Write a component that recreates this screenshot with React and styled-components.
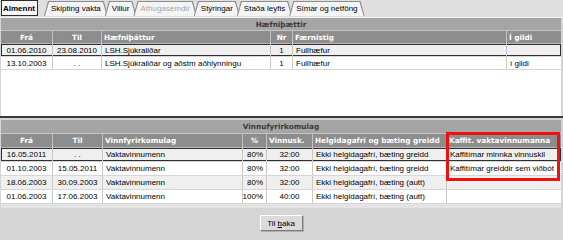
import React from 'react';
import styled, { createGlobalStyle, css } from 'styled-components';

const dither = (a, b) => `repeating-conic-gradient(${a} 0 25%, ${b} 0 50%) 0 0 / 2px 2px`;

const GlobalStyle = createGlobalStyle`
  *, *::before, *::after { box-sizing: border-box; }
  html, body { margin: 0; padding: 0; }
  body {
    background: #d6d6d6;
    font-family: "Liberation Sans", Arial, sans-serif;
    font-size: 8px;
    color: #000;
  }
`;

const Window = styled.div`
  position: relative;
  width: 563px;
  height: 234px;
  display: flex;
  flex-direction: column;
  background: ${dither('#d0d0d0', '#dadada')};
  overflow: hidden;
`;

const TabStrip = styled.div`
  height: 18px;
  display: flex;
  align-items: flex-end;
  padding: 0 0 1px 1px;
  background: ${dither('#dadada', '#e4e4e4')};
  border-bottom: 1px solid #f2f2f2;
`;

const trapezoid = 'polygon(0 100%, 4px 0, calc(100% - 4px) 0, 100% 100%)';

const Tab = styled.div`
  position: relative;
  z-index: 1;
  height: 15px;
  display: flex;
  align-items: center;
  white-space: nowrap;
  padding: 0 7px;
  margin-left: ${(p) => p.$gap}px;
  color: ${(p) => (p.$disabled ? '#a6a6a6' : '#000')};

  &::before {
    content: '';
    position: absolute;
    inset: 0;
    z-index: -1;
    background: #8c8c8c;
    clip-path: ${trapezoid};
  }
  &::after {
    content: '';
    position: absolute;
    inset: 1px 1px 0 1px;
    z-index: -1;
    background: #f4f4f4;
    clip-path: ${trapezoid};
  }

  ${(p) =>
    p.$active &&
    css`
      z-index: 2;
      height: 16px;
      padding: 0 2px 0 1px;
      font-weight: 700;
      border: 1px solid #2c2c2c;
      background: #f8f8f8;
      &::before,
      &::after {
        display: none;
      }
    `}
`;

const Grid = styled.div`
  width: 560px;
  margin-left: 1px;
  display: flex;
  flex-direction: column;
  background: #fff;
  height: ${(p) => p.$height}px;
  flex: none;
`;

const SectionBar = styled.div`
  height: ${(p) => p.$h}px;
  flex: none;
  display: flex;
  align-items: center;
  justify-content: center;
  background: ${dither('#a0a0a0', '#aaaaaa')};
  border-bottom: 1px solid #c4c4c4;
  font-family: "DejaVu Sans", Verdana, sans-serif;
  font-weight: 700;
  font-size: 7.3px;
  color: #3a3a3a;
`;

const Row = styled.div`
  display: grid;
  grid-template-columns: ${(p) => p.$cols};
  height: ${(p) => p.$h}px;
  flex: none;
  background: ${(p) => (p.$alt ? '#efefef' : '#fff')};
  border-bottom: 1px solid #d6d6d6;
  ${(p) =>
    p.$selected &&
    css`
      box-shadow: inset 0 0 0 1px #2e2e2e;
    `}
`;

const HeadRow = styled(Row)`
  background: ${dither('#888888', '#929292')};
  border-bottom: 1px solid #b8b8b8;
`;

const alignMap = { left: 'flex-start', center: 'center', right: 'flex-end' };

const Cell = styled.div`
  display: flex;
  align-items: center;
  justify-content: ${(p) => alignMap[p.$align || 'left']};
  padding: 0 3px;
  border-right: 1px solid #c8c8c8;
  white-space: nowrap;
  overflow: hidden;
  &:last-child {
    border-right: none;
  }
`;

const HeadCell = styled(Cell)`
  padding: 0 2px;
  border-right: 1px solid #c2c2c2;
  color: #fff;
  font-family: "DejaVu Sans", Verdana, sans-serif;
  font-weight: 700;
  font-size: 7.3px;
`;

const Filler = styled.div`
  flex: 1;
  background: #fff;
`;

const Splitter = styled.div`
  height: 2px;
  flex: none;
  background: #3a3a3a;
  margin-bottom: 2px;
`;

const BottomEdge = styled.div`
  height: 4px;
  flex: none;
  width: 560px;
  margin-left: 1px;
  background: #e4e4e4;
`;

const Footer = styled.div`
  flex: 1;
  display: flex;
  justify-content: center;
  align-items: flex-start;
  padding-top: 7px;
`;

const Button = styled.button`
  width: 43px;
  height: 16px;
  padding: 0;
  margin: 0 0 0 -1px;
  font-family: "Liberation Sans", Arial, sans-serif;
  font-size: 8px;
  color: #000;
  background: ${dither('#d6d6d6', '#e0e0e0')};
  border: 1px solid;
  border-color: #ffffff #7c7c7c #7c7c7c #ffffff;
  box-shadow: 1px 1px 0 #b0b0b0;
`;

const Highlight = styled.div`
  position: absolute;
  left: 446px;
  top: 132px;
  width: 114px;
  height: 49px;
  border: 3px solid #f01010;
  pointer-events: none;
`;

const tabs = [
  { label: 'Almennt', active: true, gap: 0 },
  { label: 'Skipting vakta', gap: 6 },
  { label: 'Villur', gap: -3 },
  { label: 'Athugasemdir', disabled: true, gap: -3 },
  { label: 'Stýringar', gap: -3 },
  { label: 'Staða leyfis', gap: -3 },
  { label: 'Símar og netföng', gap: -3 },
];

const table1 = {
  title: 'Hæfniþættir',
  cols: '52px 49px 169px 22px 214px 1fr',
  head: [
    ['Frá', 'center'],
    ['Til', 'center'],
    ['Hæfniþáttur', 'left'],
    ['Nr', 'center'],
    ['Færnistig', 'left'],
    ['Í gildi', 'left'],
  ],
  align: ['center', 'center', 'left', 'center', 'left', 'left'],
  rows: [
    ['01.06.2010', '23.08.2010', 'LSH.Sjúkraliðar', '1', 'Fullhæfur', ''],
    ['13.10.2003', '. .', 'LSH.Sjúkraliðar og aðstm aðhlynningu', '1', 'Fullhæfur', 'í gildi'],
  ],
};

const table2 = {
  title: 'Vinnufyrirkomulag',
  cols: '52px 50px 140px 24px 46px 134px 1fr',
  head: [
    ['Frá', 'center'],
    ['Til', 'center'],
    ['Vinnfyrirkomulag', 'left'],
    ['%', 'center'],
    ['Vinnusk.', 'left'],
    ['Helgidagafrí og bæting greidd', 'left'],
    ['Kaffit. vaktavinnumanna', 'left'],
  ],
  align: ['center', 'center', 'left', 'right', 'center', 'left', 'left'],
  rows: [
    ['16.05.2011', '. .', 'Vaktavinnumenn', '80%', '32:00', 'Ekki helgidagafrí, bæting greidd', 'Kaffitímar minnka vinnuskil'],
    ['01.10.2003', '15.05.2011', 'Vaktavinnumenn', '80%', '32:00', 'Ekki helgidagafrí, bæting greidd', 'Kaffitímar greiddir sem viðbót'],
    ['18.06.2003', '30.09.2003', 'Vaktavinnumenn', '80%', '32:00', 'Ekki helgidagafrí, bæting (autt)', ''],
    ['01.06.2003', '17.06.2003', 'Vaktavinnumenn', '100%', '40:00', 'Ekki helgidagafrí, bæting (autt)', ''],
  ],
};

function DataGrid({ table, height, rowH, filler }) {
  return (
    <Grid $height={height}>
      <SectionBar $h={rowH}>{table.title}</SectionBar>
      <HeadRow $cols={table.cols} $h={rowH}>
        {table.head.map(([label, align]) => (
          <HeadCell key={label} $align={align}>
            {label}
          </HeadCell>
        ))}
      </HeadRow>
      {table.rows.map((row, i) => (
        <Row key={i} $cols={table.cols} $h={rowH} $alt={i % 2 === 0} $selected={i === 0}>
          {row.map((v, j) => (
            <Cell key={j} $align={table.align[j]}>
              {v}
            </Cell>
          ))}
        </Row>
      ))}
      {filler && <Filler />}
    </Grid>
  );
}

export default function App() {
  return (
    <>
      <GlobalStyle />
      <Window>
        <TabStrip>
          {tabs.map((t) => (
            <Tab key={t.label} $active={t.active} $disabled={t.disabled} $gap={t.gap}>
              {t.label}
            </Tab>
          ))}
        </TabStrip>
        <DataGrid table={table1} height={98} rowH={13} filler />
        <Splitter />
        <DataGrid table={table2} height={84} rowH={14} />
        <BottomEdge />
        <Footer>
          <Button>
            Til <u>b</u>aka
          </Button>
        </Footer>
        <Highlight />
      </Window>
    </>
  );
}
